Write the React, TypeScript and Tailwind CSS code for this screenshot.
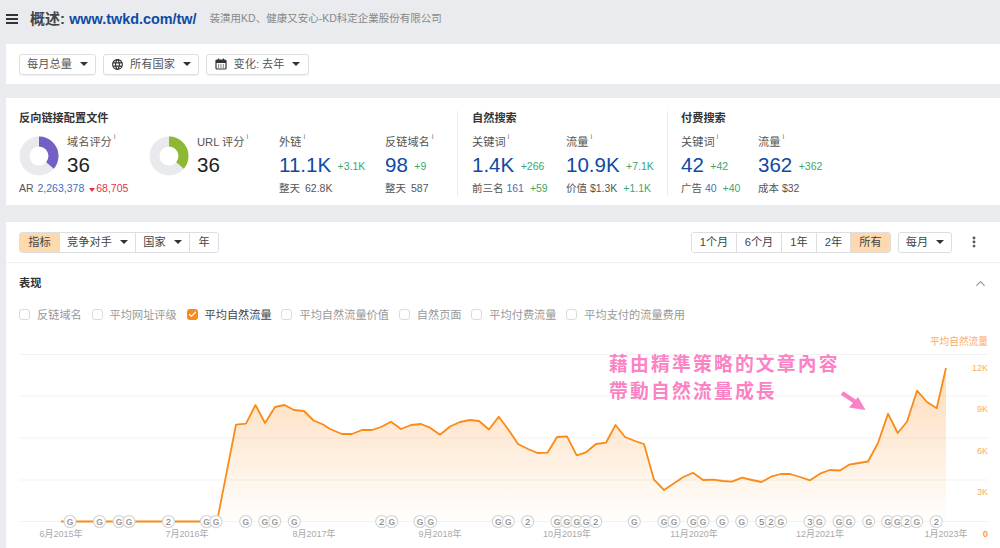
import { Check, ChevronUp, EllipsisVertical } from "lucide-react";
import { MdLanguage } from "react-icons/md";

const font = { fontFamily: '"Liberation Sans", "Noto Sans CJK SC", sans-serif' };

const line: [number, number][] = [
  [61, 521.5], [217, 521.5], [236, 424.7], [246, 423.7], [255.5, 405], [265, 423], [275, 407], [284.5, 405],
  [294, 410], [304, 411], [313.5, 420.5], [323, 424.5], [330, 429], [342, 434], [352, 434], [362, 430],
  [372, 430], [381, 427], [391, 421.7], [401, 429], [411, 425], [421, 424], [430, 427.7], [440, 434.7],
  [450, 426.5], [460, 422], [470, 420], [479, 421], [489, 429.5], [498.7, 416.7], [508, 429], [518, 444],
  [528, 449], [537.5, 453], [547.5, 452.7], [557, 437], [567, 436.3], [576.7, 455.3], [586, 452.3], [596, 444],
  [606, 442.7], [615.5, 425], [625, 437], [635, 441], [644, 444], [654, 479.7], [664, 490], [673, 484],
  [683, 477.3], [693, 472.7], [703, 480], [713, 479.7], [723, 481], [732, 481.7], [742, 477.7], [752, 480],
  [761.5, 482], [771, 476.7], [781, 474], [790, 474], [800, 477], [810, 480.3], [820, 473.7], [829.7, 470],
  [840, 470.5], [849, 464.7], [859, 463], [868, 461.5], [878, 443], [888, 413.7], [897.7, 433], [907, 421.7],
  [917, 390.7], [927, 402], [936.7, 408.3], [946, 368],
];

const markers: [number, string][] = [
  [70, "G"], [99.5, "G"], [119, "G"], [129, "G"], [168.5, "2"], [206.5, "G"], [216, "G"], [245.7, "G"],
  [264.7, "G"], [274.7, "G"], [294.3, "G"], [381.7, "2"], [391.7, "G"], [420, "G"], [430.7, "G"], [498.3, "G"],
  [508.3, "G"], [527.7, "2"], [557, "G"], [566.7, "G"], [576.7, "G"], [586, "G"], [595.7, "2"], [634.3, "G"],
  [664, "G"], [674, "G"], [693.3, "G"], [703, "G"], [722.3, "G"], [741.7, "G"], [761.7, "5"], [771, "2"],
  [780.7, "G"], [810, "3"], [819.3, "G"], [839, "G"], [849, "G"], [868.7, "G"], [887.7, "G"], [897.3, "G"],
  [907, "2"], [916.7, "G"], [936.3, "2"],
];

const xTicks: [number, string][] = [
  [61, "6月2015年"], [187, "7月2016年"], [314, "8月2017年"], [440, "9月2018年"],
  [567, "10月2019年"], [694, "11月2020年"], [820, "12月2021年"], [946, "1月2023年"],
];

const yTicks: [number, string][] = [[367, "12K"], [408, "9K"], [450, "6K"], [491, "3K"]];

function Caret() {
  return <span className="ml-2 h-0 w-0 border-x-[4px] border-t-[4px] border-x-transparent border-t-[#333]" />;
}

function Donut({ color }: { color: string }) {
  return (
    <svg width="40" height="40" viewBox="0 0 40 40" className="shrink-0">
      <circle cx="20" cy="20" r="14.5" fill="none" stroke="#e8eaed" strokeWidth="10" />
      <circle
        cx="20"
        cy="20"
        r="14.5"
        fill="none"
        stroke={color}
        strokeWidth="10"
        strokeDasharray="32.8 91.1"
        transform="rotate(-90 20 20)"
      />
    </svg>
  );
}

function Label({ text }: { text: string }) {
  return (
    <div className="flex h-[14px] items-center text-[11.2px] leading-[14px] text-[#555]">
      {text}
      <sup className="ml-[2px] -translate-y-[1px] text-[8px] leading-none text-[#888]">i</sup>
    </div>
  );
}

function Metric({ width, label, value, delta, sub }: { width: string; label: string; value: string; delta?: string; sub: React.ReactNode }) {
  return (
    <div className={`${width} shrink-0`}>
      <Label text={label} />
      <div className="mt-[4px] flex h-[24px] items-center whitespace-nowrap">
        <span className="text-[20.5px] leading-[24px] text-[#0f4aa3]">{value}</span>
        {delta && <span className="ml-[6.5px] mt-[4px] text-[10.5px] text-[#3aa76d]">{delta}</span>}
      </div>
      <div className="mt-[4px] h-[14px] whitespace-nowrap text-[10.5px] leading-[14px] text-[#555]">{sub}</div>
    </div>
  );
}

function Score({ width, label, color }: { width: string; label: string; color: string }) {
  return (
    <div className={`${width} flex shrink-0 items-start gap-[8px]`}>
      <span className="mt-[1px]"><Donut color={color} /></span>
      <div>
        <Label text={label} />
        <div className="mt-[4px] text-[20.5px] leading-[24px] text-[#222]">36</div>
      </div>
    </div>
  );
}

function Heading({ children }: { children: React.ReactNode }) {
  return <div className="h-[14px] text-[11.2px] font-bold leading-[14px] text-[#333]">{children}</div>;
}

function Seg({ w, active, caret, children }: { w: string; active?: boolean; caret?: boolean; children: React.ReactNode }) {
  return (
    <div
      className={`${w} flex h-full items-center justify-center border-r border-[#dcdee1] text-[11.2px] text-[#444] last:border-r-0 ${active ? "bg-[#fdd9ad]" : "bg-white"}`}
    >
      {children}
      {caret && <Caret />}
    </div>
  );
}

function Option({ label, checked }: { label: string; checked?: boolean }) {
  return (
    <div className="flex items-center gap-[7px]">
      {checked ? (
        <span className="flex h-[11px] w-[11px] items-center justify-center rounded-[3px] bg-[#f98a1e]">
          <Check size={9} strokeWidth={3.5} color="#fff" />
        </span>
      ) : (
        <span className="h-[11px] w-[11px] rounded-[3px] border border-[#d9dadc]" />
      )}
      <span className={`text-[11.2px] ${checked ? "text-[#444]" : "text-[#999]"}`}>{label}</span>
    </div>
  );
}

function Chart() {
  const path = line.map(([x, y]) => `${x},${y}`).join(" ");
  return (
    <svg width="994" height="218" viewBox="6 330 994 218" className="block">
      <defs>
        <linearGradient id="area" gradientUnits="userSpaceOnUse" x1="0" y1="385" x2="0" y2="525">
          <stop offset="0" stopColor="#fb8c1c" stopOpacity="0.28" />
          <stop offset="1" stopColor="#fb8c1c" stopOpacity="0" />
        </linearGradient>
      </defs>
      {[354.5, 396, 438, 480, 521.5].map((y) => (
        <line key={y} x1="19" x2="988" y1={y} y2={y} stroke="#f3f3f4" strokeWidth="1.2" />
      ))}
      <polygon points={`217,521.5 ${line.slice(2).map(([x, y]) => `${x},${y}`).join(" ")} 946,521.5`} fill="url(#area)" />
      <polyline points={path} fill="none" stroke="#fb8a17" strokeWidth="1.8" strokeLinejoin="round" />
      {markers.map(([x, t]) => (
        <g key={x}>
          <circle cx={x} cy="521.5" r="6" fill="#fff" stroke="#d4d4d4" strokeWidth="1.1" />
          <text
            x={x}
            y={t === "G" ? 524.6 : 525}
            textAnchor="middle"
            fontSize={t === "G" ? 8.5 : 9.5}
            fontWeight={t === "G" ? 700 : 400}
            fill={t === "G" ? "#9a9a9a" : "#777"}
            style={font}
          >
            {t}
          </text>
        </g>
      ))}
      {xTicks.map(([x, t]) => (
        <text key={t} x={x} y="537" textAnchor="middle" fontSize="9" fill="#a9a9a9" style={font}>
          {t}
        </text>
      ))}
      <text x="988" y="345" textAnchor="end" fontSize="9.7" fill="#fdab66" style={font}>平均自然流量</text>
      {yTicks.map(([y, t]) => (
        <text key={t} x="988" y={y + 4} textAnchor="end" fontSize="9" fill="#fdab66" style={font}>
          {t}
        </text>
      ))}
      <text x="988" y="537" textAnchor="end" fontSize="9.5" fontWeight="700" fill="#fb9a4a" style={font}>0</text>
      <line x1="842" y1="393" x2="857" y2="403" stroke="#fb82c4" strokeWidth="4.5" />
      <polygon points="849,407.5 865.5,410 858,397" fill="#fb82c4" />
    </svg>
  );
}

export default function App() {
  return (
    <div className="h-[548px] w-[1000px] overflow-hidden bg-[#e9ebee]" style={font}>
      <header className="flex h-[44px] items-center pb-[6px] pl-[6px]">
        <div className="flex w-[12px] flex-col gap-[2px]">
          <span className="h-[2px] bg-[#333]" />
          <span className="h-[2px] bg-[#333]" />
          <span className="h-[2px] bg-[#333]" />
        </div>
        <h1 className="ml-[12px] text-[15px] font-bold text-[#444]">
          概述: <span className="text-[14.4px] text-[#0f4aa3]">www.twkd.com/tw/</span>
        </h1>
        <span className="ml-[13px] text-[10.5px] text-[#888]">装潢用KD、健康又安心-KD科定企業股份有限公司</span>
      </header>

      <section className="ml-[6px] flex h-[40px] items-center gap-[7px] bg-white pl-[13px]">
        <button className="flex h-[21px] w-[77px] items-center justify-center rounded-[3px] border border-[#dcdee1] text-[11.2px] text-[#555] shadow-[0_1px_1px_rgba(0,0,0,0.06)]">
          每月总量
          <Caret />
        </button>
        <button className="flex h-[21px] w-[96px] items-center justify-center rounded-[3px] border border-[#dcdee1] text-[11.2px] text-[#555] shadow-[0_1px_1px_rgba(0,0,0,0.06)]">
          <MdLanguage size={13} color="#333" className="mr-[6px]" />
          所有国家
          <Caret />
        </button>
        <button className="flex h-[21px] w-[103px] items-center justify-center rounded-[3px] border border-[#dcdee1] text-[11.2px] text-[#555] shadow-[0_1px_1px_rgba(0,0,0,0.06)]">
          <svg width="12" height="12" viewBox="0 0 12 12" className="mr-[7px]">
            <rect x="1" y="2" width="10" height="9" rx="1" fill="none" stroke="#333" strokeWidth="1.2" />
            <rect x="1" y="2" width="10" height="3" fill="#333" />
            <rect x="3" y="0.5" width="1.2" height="2.5" fill="#333" />
            <rect x="7.8" y="0.5" width="1.2" height="2.5" fill="#333" />
            <path d="M3 7h1.2M5.4 7h1.2M7.8 7h1.2M3 9h1.2M5.4 9h1.2M7.8 9h1.2" stroke="#333" strokeWidth="1" />
          </svg>
          变化: 去年
          <Caret />
        </button>
      </section>

      <section className="ml-[6px] mt-[14px] flex h-[107px] bg-white pl-[13px] pt-[13px]">
        <div className="w-[438px] shrink-0">
          <Heading>反向链接配置文件</Heading>
          <div className="mt-[10px] flex">
            <div className="w-[260px] shrink-0">
              <div className="flex">
                <Score width="w-[130px]" label="域名评分" color="#7460c4" />
                <Score width="w-[130px]" label="URL 评分" color="#8fb832" />
              </div>
              <div className="mt-[4px] h-[14px] text-[10.5px] leading-[14px] text-[#555]">
                AR <span className="ml-[1px] text-[#3f6fc0]">2,263,378</span>
                <span className="ml-[5px] mr-[1px] inline-block h-0 w-0 border-x-[3px] border-t-[4px] border-x-transparent border-t-[#e5334b]" />
                <span className="text-[#e5334b]">68,705</span>
              </div>
            </div>
            <Metric width="w-[106px]" label="外链" value="11.1K" delta="+3.1K" sub={<>整天<span className="ml-[5px]">62.8K</span></>} />
            <Metric width="w-[72px]" label="反链域名" value="98" delta="+9" sub={<>整天<span className="ml-[5px]">587</span></>} />
          </div>
        </div>
        <div className="h-[85px] w-[210px] shrink-0 border-l border-[#ececee] pl-[14px]">
          <Heading>自然搜索</Heading>
          <div className="mt-[10px] flex">
            <Metric
              width="w-[94px]"
              label="关键词"
              value="1.4K"
              delta="+266"
              sub={<>前三名 <span className="text-[#3f6fc0]">161</span> <span className="ml-[3px] text-[#3aa76d]">+59</span></>}
            />
            <Metric
              width="w-[95px]"
              label="流量"
              value="10.9K"
              delta="+7.1K"
              sub={<>价值 $1.3K <span className="ml-[3px] text-[#3aa76d]">+1.1K</span></>}
            />
          </div>
        </div>
        <div className="h-[85px] flex-1 border-l border-[#ececee] pl-[13px]">
          <Heading>付费搜索</Heading>
          <div className="mt-[10px] flex">
            <Metric
              width="w-[77px]"
              label="关键词"
              value="42"
              delta="+42"
              sub={<>广告 <span className="text-[#3f6fc0]">40</span> <span className="ml-[3px] text-[#3aa76d]">+40</span></>}
            />
            <Metric width="w-[90px]" label="流量" value="362" delta="+362" sub="成本 $32" />
          </div>
        </div>
      </section>

      <section className="ml-[6px] mt-[17px] h-[326px] bg-white">
        <div className="flex h-[41px] items-center justify-between border-b border-[#f0f0f1] pl-[13px] pr-[19px]">
          <div className="flex h-[21px] overflow-hidden rounded-[3px] border border-[#dcdee1]">
            <Seg w="w-[40px]" active>指标</Seg>
            <Seg w="w-[76px]" caret>竞争对手</Seg>
            <Seg w="w-[54px]" caret>国家</Seg>
            <Seg w="w-[28px]">年</Seg>
          </div>
          <div className="flex items-center">
            <div className="flex h-[21px] overflow-hidden rounded-[3px] border border-[#dcdee1]">
              <Seg w="w-[45px]">1个月</Seg>
              <Seg w="w-[45px]">6个月</Seg>
              <Seg w="w-[35px]">1年</Seg>
              <Seg w="w-[34px]">2年</Seg>
              <Seg w="w-[39px]" active>所有</Seg>
            </div>
            <button className="ml-[7px] flex h-[21px] w-[54px] items-center justify-center rounded-[3px] border border-[#dcdee1] text-[11.2px] text-[#444]">
              每月
              <Caret />
            </button>
            <EllipsisVertical size={14} strokeWidth={3} color="#555" className="ml-[15px]" />
          </div>
        </div>
        <div className="flex h-[41px] items-center justify-between pl-[13px] pr-[12px]">
          <span className="text-[11.2px] font-bold text-[#333]">表现</span>
          <ChevronUp size={15} color="#999" />
        </div>
        <div className="mt-[1px] flex h-[20px] items-center gap-[9.8px] pl-[13px]">
          <Option label="反链域名" />
          <Option label="平均网址评级" />
          <Option label="平均自然流量" checked />
          <Option label="平均自然流量价值" />
          <Option label="自然页面" />
          <Option label="平均付费流量" />
          <Option label="平均支付的流量费用" />
        </div>
        <div className="relative mt-[5px]">
          <Chart />
          <div
            className="absolute left-[603px] top-[19px] text-[18.8px] font-bold leading-[27px] tracking-[2.2px] text-[#fb82c4]"
            style={{ fontFamily: '"Noto Sans CJK TC", sans-serif' }}
          >
            藉由精準策略的文章內容
            <br />
            帶動自然流量成長
          </div>
        </div>
      </section>
    </div>
  );
}
